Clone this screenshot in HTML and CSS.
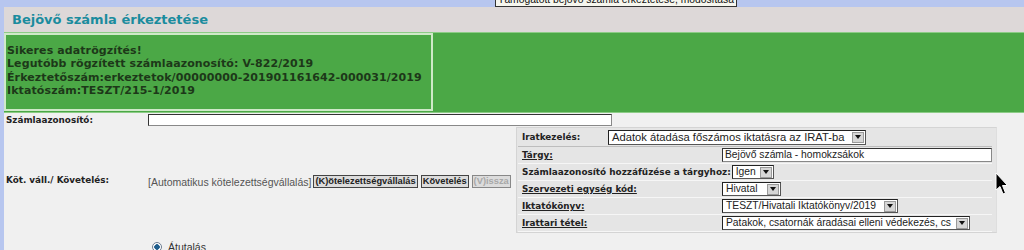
FILE: index.html
```html
<!DOCTYPE html>
<html lang="hu">
<head>
    <meta charset="UTF-8">
    <title>Bejövő számla érkeztetése</title>
    <link rel="stylesheet" href="styles.css">
</head>
<body>
    <div class="topbar">
        <div class="tooltip">Támogatott bejövő számla érkeztetése, módosítása</div>
    </div>

    <div class="page">
        <div class="header">
            <h1>Bejövő számla érkeztetése</h1>
        </div>

        <div class="notice">
            <div class="notice-box">
                Sikeres adatrögzítés!<br>
                Legutóbb rögzített számlaazonosító: V-822/2019<br>
                Érkeztetőszám:erkeztetok/00000000-201901161642-000031/2019<br>
                Iktatószám:TESZT/215-1/2019
            </div>
        </div>

        <table class="form">
            <colgroup>
                <col class="col-label">
                <col class="col-commit">
                <col class="col-panel">
            </colgroup>
            <tr class="row-id">
                <th>Számlaazonosító:</th>
                <td colspan="2"><div class="field field-id"></div></td>
            </tr>
            <tr class="row-commit">
                <th>Köt. váll./ Követelés:</th>
                <td class="commit">
                    <span class="auto">[Automatikus kötelezettségvállalás]</span><button class="btn">(K)ötelezettségvállalás</button><button class="btn">Követelés</button><button class="btn" disabled>(V)issza</button>
                </td>
                <td class="panel-cell">
                    <div class="panel">
                        <div class="panel-head">
                            <span class="plabel">Iratkezelés:</span>
                            <div class="select sel-iratkezeles"><span>Adatok átadása főszámos iktatásra az IRAT-ba</span><i class="arrow"></i></div>
                        </div>
                        <div class="panel-rows">
                            <div class="prow">
                                <span class="plabel link">Tárgy:</span>
                                <div class="field field-targy">Bejövő számla - homokzsákok</div>
                            </div>
                            <div class="prow prow-inline">
                                <span class="plabel">Számlaazonosító hozzáfűzése a tárgyhoz:</span>
                                <div class="select sel-igen"><span>Igen</span><i class="arrow"></i></div>
                            </div>
                            <div class="prow">
                                <span class="plabel link">Szervezeti egység kód:</span>
                                <div class="select sel-hivatal"><span>Hivatal</span><i class="arrow"></i></div>
                            </div>
                            <div class="prow">
                                <span class="plabel link">Iktatókönyv:</span>
                                <div class="select sel-konyv"><span>TESZT/Hivatali Iktatókönyv/2019</span><i class="arrow"></i></div>
                            </div>
                            <div class="prow">
                                <span class="plabel link">Irattari tétel:</span>
                                <div class="select sel-tetel"><span>Patakok, csatornák áradásai elleni védekezés, cs</span><i class="arrow"></i></div>
                            </div>
                        </div>
                    </div>
                </td>
            </tr>
            <tr class="row-pay">
                <th></th>
                <td colspan="2">
                    <label class="radio"><span class="radio-dot"></span>Átutalás</label>
                </td>
            </tr>
        </table>
    </div>

    <svg class="cursor" width="14" height="24" viewBox="0 0 14 24">
        <path d="M1 1 L1 18 L5 14.5 L8 22 L10.5 21 L7.5 13.5 L12.5 13.5 Z" fill="#000" stroke="#fff" stroke-width="1"/>
    </svg>
</body>
</html>
```

FILE: styles.css
```css
body {
    margin: 0;
    height: 250px;
    overflow: hidden;
    position: relative;
    background: #b7c6ef;
    font-family: "DejaVu Sans", Verdana, sans-serif;
    color: #222;
}

.topbar {
    position: relative;
    height: 7px;
}

.tooltip {
    position: absolute;
    left: 495px;
    top: -8px;
    width: 240px;
    height: 13px;
    border: 1px solid #333;
    background: #f6f6ee;
    color: #111;
    font: 10.3px/13px "Liberation Sans", Arial, sans-serif;
    text-align: center;
    white-space: nowrap;
}

.page {
    margin-left: 4px;
    height: 243px;
    background: #f0f0f0;
}

.header {
    height: 25px;
    background: #ddd8d8;
}

.header h1 {
    margin: 0;
    padding: 4px 0 0 8px;
    font-size: 13px;
    line-height: 17px;
    color: #1b8c9e;
}

.notice {
    height: 79px;
    background: #4ba846;
    border-top: 1px solid #8ccc86;
    border-bottom: 1px solid #8ccc86;
}

.notice-box {
    width: 424px;
    height: 65px;
    padding: 9px 0 0 1px;
    border: 2px solid #cfe9c8;
    font-size: 11px;
    line-height: 13.4px;
    font-weight: bold;
    letter-spacing: 0.1px;
    color: #1d3819;
    white-space: nowrap;
    overflow: hidden;
}

.form {
    table-layout: fixed;
    width: 995px;
    border-collapse: collapse;
}

.col-label { width: 144px; }
.col-commit { width: 368px; }
.col-panel { width: 483px; }

.form th,
.form td {
    padding: 0;
}

.form th {
    padding-left: 2px;
    text-align: left;
    font-size: 8.8px;
    font-weight: bold;
    color: #222;
}

.row-id {
    height: 14px;
}

.field {
    box-sizing: border-box;
    background: #fff;
    border: 1px solid #888;
    border-top-color: #333;
    border-left-color: #333;
    font: 10.3px/12px "Liberation Sans", Arial, sans-serif;
    color: #222;
    padding-left: 2px;
    white-space: nowrap;
    overflow: hidden;
}

.row-id .field-id {
    width: 464px;
    height: 12px;
}

.commit {
    vertical-align: middle;
    white-space: nowrap;
    overflow: hidden;
}

.auto {
    font: 10.5px "Liberation Sans", Arial, sans-serif;
    color: #555;
    vertical-align: middle;
}

.btn {
    margin: 0 0 0 3px;
    padding: 0 1px;
    height: 13px;
    border: 1px solid #444;
    background: #dcdcdc;
    font: bold 9.3px/11px "Liberation Sans", Arial, sans-serif;
    color: #222;
    vertical-align: middle;
}

.auto + .btn {
    margin-left: 2px;
}

.btn:disabled {
    color: #a8a8a8;
    border-color: #888;
}

.panel-cell {
    padding-top: 1px;
    vertical-align: top;
}

.panel {
    width: 479px;
    height: 104px;
    background: #e5e5e5;
    border: 1px solid #d4d4d4;
    border-right-color: #dedede;
}

.plabel {
    font-size: 8.8px;
    font-weight: bold;
    color: #222;
    white-space: nowrap;
}

.plabel.link {
    text-decoration: underline;
}

.panel-head {
    display: grid;
    grid-template-columns: 86px auto;
    align-items: center;
    height: 18px;
    padding-left: 5px;
}

.panel-rows {
    margin: 0 4px 0 1px;
    border-top: 1px solid #bdbdbd;
}

.prow {
    display: grid;
    grid-template-columns: 204px auto;
    align-items: center;
    height: 16px;
    border-bottom: 1px solid #f6f6f6;
}

.prow-inline {
    display: flex;
    gap: 1px;
}

.prow .plabel {
    padding-left: 4px;
}

.prow-inline .plabel {
    font-size: 8.9px;
}

.field-targy {
    width: 270px;
    height: 14px;
}

.select {
    box-sizing: border-box;
    display: flex;
    align-items: center;
    justify-content: space-between;
    height: 14px;
    padding: 0 1px 0 3px;
    background: #fff;
    border: 1px solid #555;
    border-top-color: #222;
    border-left-color: #222;
    font: 10.3px/12px "Liberation Sans", Arial, sans-serif;
    color: #222;
    white-space: nowrap;
    overflow: hidden;
}

.sel-iratkezeles {
    width: 258px;
    height: 15px;
    font-size: 11.2px;
}

.sel-igen { width: 42px; }
.sel-hivatal { width: 59px; }
.sel-konyv { width: 176px; }
.sel-tetel { width: 248px; }

.arrow {
    box-sizing: border-box;
    display: flex;
    align-items: center;
    justify-content: center;
    flex: none;
    width: 12px;
    height: 11px;
    margin-left: 3px;
    background: #d6d6d6;
    border: 1px solid #9a9a9a;
}

.arrow::after {
    content: "";
    border-left: 3px solid transparent;
    border-right: 3px solid transparent;
    border-top: 4px solid #111;
}

.row-pay td {
    padding: 8px 0 0 4px;
}

.radio {
    display: flex;
    align-items: center;
    gap: 6px;
    font: 10.5px "Liberation Sans", Arial, sans-serif;
    color: #333;
}

.radio-dot {
    box-sizing: border-box;
    width: 10px;
    height: 10px;
    border-radius: 50%;
    border: 1px solid #6c7c90;
    background: radial-gradient(circle, #1f5d8c 0 2.5px, #fff 3px);
}

.cursor {
    position: absolute;
    left: 995px;
    top: 172px;
}
```
